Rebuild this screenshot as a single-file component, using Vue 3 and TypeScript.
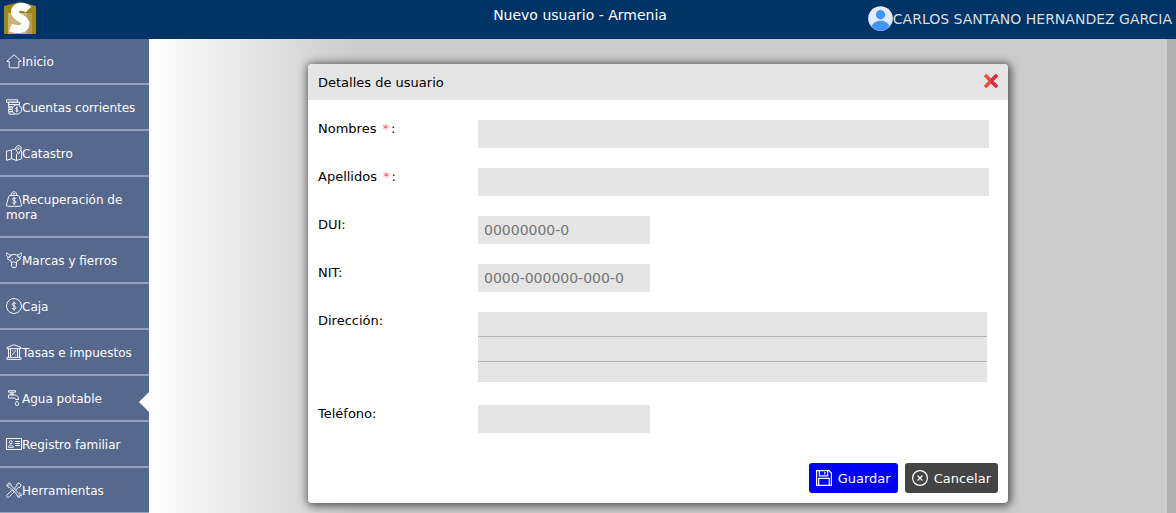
<script setup lang="ts">
import { ref } from 'vue'

interface MenuItem {
  label: string
  paths: string[]
  active?: boolean
}

const menu: MenuItem[] = [
  { label: 'Inicio', paths: ['M.8 8.4 8 1.7l7.2 6.7h-2.400M.8 8.4h2.400v5.600q0 .8.8.8h8q.8 0 .8-.8V8.400'] },
  {
    label: 'Cuentas corrientes',
    paths: ['M.5.8h11v2.4H.5zM2.5 3.2h11v2.3h-11zM6.5 5.5H2.5v2.4h4M6 7.9H3v2.4h3M6 10.3H2.5v2.4h4M7 12.7H3v2.5h6', 'M15.5 10.5a4.7 4.7 0 1 1-9.4 0 4.7 4.7 0 0 1 9.4 0zM12 9.2c-.5-.8-2.3-.7-2.3.4 0 1.2 2.3.7 2.3 2 0 1.1-1.8 1.2-2.4.3M10.8 7.7v5.8'],
  },
  {
    label: 'Catastro',
    paths: ['M10 3.7 5.5 5.2v8.5l5 1.8V8.7M5.5 5.2.5 6v9.400l5-1.700M10.5 15.5l5-1.7V5.5', 'M12.500 9 10.200 5a2.800 2.800 0 1 1 4.600 0zM13.3 3.5a.8.8 0 1 1-1.6 0 .8.8 0 0 1 1.6 0z'],
  },
  {
    label: 'Recuperación de mora',
    paths: ['M4 4.5h8q1 0 1.300 1l2.200 8.500q.2 1.300-1 1.300h-13q-1.200 0-1-1.300L2.700 5.500q.3-1 1.300-1zM5.3 4.3a2.8 2.8 0 1 1 5.4 0M6.7 2.8h2.6', 'M10 7.7c-.5-1-3.5-1-3.5.6 0 1.7 3.5.9 3.5 2.8 0 1.6-3 1.7-3.7.4M8.2 6v8'],
  },
  {
    label: 'Marcas y fierros',
    paths: ['M5 3C3.600 3 2 2.500.8.700-.1 3.4.8 5 3.800 5.200M11 3c1.400 0 3-.5 4.200-2.300.9 2.700 0 4.300-3 4.500M5 3q3-1.200 6 0M3.800 5.200 1 6.400l2.200 1.900 1.500-.2.8 3M12.200 5.200 15 6.400l-2.200 1.900-1.500-.2-.8 3M3.800 5.200 5 3M12.200 5.200 11 3', 'M5.5 10.8q2.5-2 5 0v3L9.7 15.4H6.3L5.5 13.8zM5.800 6.300l1.200.8M10.200 6.300l-1.200.8M6.8 12.8h.5M8.800 12.8h.5'],
  },
  {
    label: 'Caja',
    paths: ['M15.5 8a7.5 7.5 0 1 1-15 0 7.5 7.5 0 0 1 15 0z', 'M10 5.9c-.4-1.4-3.8-1.4-3.8.5 0 2.1 3.8 1.1 3.8 3.2 0 1.9-3.3 2-4 .5M8 3.5v9'],
  },
  {
    label: 'Tasas e impuestos',
    paths: ['M1 3.5 8 .7l7 2.8v1.2H1zM1 15.4h14v-2H1zM2.500 4.7v8.7M4.5 4.7v8.7M11.5 4.7v8.7M13.500 4.7v8.7', 'M6 11.2l4-5M6.3 7h.6M9.3 10.8h.6'],
  },
  {
    label: 'Agua potable',
    paths: ['M2.500.7h7v1.500h-7zM6 2.200v2.500M2.500 5h6c2.700 0 4 1.800 4 4.500h-3c0-1-.5-1.500-1.600-1.500H2.500zM4.300 5V3.800h3.400V5', 'M11 10.900c-1 1.400-1.700 2-1.700 2.900a1.700 1.700 0 0 0 3.400 0c0-.9-.7-1.500-1.700-2.900z'],
  },
  {
    label: 'Registro familiar',
    paths: ['M.5 2.5h15v11H.5z', 'M2.3 11.3c0-3 5-3 5 0zM6.2 6.2a1.4 1.6 0 1 1-2.8 0 1.4 1.6 0 0 1 2.8 0zM9 5.5h5M9 7.5h5M9 9.5h5'],
  },
  {
    label: 'Herramientas',
    paths: ['M5.200 3.800 12.500 11c1.700-.3 3.100 1.200 2.800 3l-1.500-1.200-1.200 1.100 1.300 1.400c-1.700.4-3.100-1-2.900-2.700L3.800 5.400C2 5.700.7 4.300.9 2.500l1.600 1.300 1.100-1.100L2.200 1.100c1.800-.4 3.200.9 3 2.700z', 'M15.200 3 13 .8l-2.300 1.600v1.500L8.500 6.100l1.600 1.600 2.200-2.200h1.500zM6.600 7.800.9 13c-1.200 1.200.9 3.300 2.100 2.100l5.500-5.600z'],
  },
].map((item) => ({ ...item, active: item.label === 'Agua potable' }))

const nombres = ref('')
const apellidos = ref('')
const dui = ref('')
const nit = ref('')
const direccion = ref('')
const telefono = ref('')
</script>

<template>
  <div class="app">
    <header class="topbar">
      <svg class="logo" viewBox="0 0 32 34" aria-label="Logo">
        <path fill="#a08418" d="M0 5 16 1l16 4v28H0z" />
        <path fill="#c8b478" d="M4 12h24v21H4z" />
        <path fill="#b49c48" d="M23 12h5v21h-5z" />
        <path
          fill="none"
          stroke="#fff"
          stroke-width="8"
          d="M24.500 8.500C21 5 11 4 11 11c0 6 11 6 10.500 12-.5 6-8.500 6-15 3.500"
        />
      </svg>
      <h1 class="title">Nuevo usuario - Armenia</h1>
      <div class="user">
        <svg class="avatar" viewBox="0 0 25 25" aria-hidden="true">
          <circle cx="12.500" cy="12.500" r="12.300" fill="#e4eaff" />
          <circle cx="12.500" cy="8.700" r="4.700" fill="#4294ff" />
          <path fill="#4294ff" d="M3.500 20.800c2-8 16-8 18 0a12.300 12.300 0 0 1-18 0z" />
        </svg>
        <span>CARLOS SANTANO HERNANDEZ GARCIA</span>
      </div>
    </header>

    <div class="body">
      <nav class="sidebar">
        <a v-for="item in menu" :key="item.label" href="#" class="item" :class="{ active: item.active }"
          ><svg class="icon" viewBox="0 0 16 16" aria-hidden="true">
            <path v-for="d in item.paths" :key="d" :d="d" /></svg
          >{{ item.label }}</a
        >
      </nav>

      <main class="content">
        <form class="dialog" @submit.prevent>
          <div class="dialog-head">
            <h2>Detalles de usuario</h2>
            <button type="button" class="close" aria-label="Cerrar">
              <svg viewBox="0 0 16 16" aria-hidden="true">
                <path fill="#fa4438" d="M3.200.800.800 3.200 5.600 8 .800 12.800l2.400 2.400L8 10.400l4.800 4.800 2.400-2.400L10.400 8l4.800-4.800L12.800.800 8 5.600z" />
                <path fill="#d1304c" d="M8 5.600 12.800.800l2.400 2.400L10.400 8l4.800 4.800-2.400 2.400L8 10.400z" />
              </svg>
            </button>
          </div>

          <div class="fields">
            <label for="nombres">Nombres <span class="req">*</span>:</label>
            <input id="nombres" v-model="nombres" type="text" />
            <label for="apellidos">Apellidos <span class="req">*</span>:</label>
            <input id="apellidos" v-model="apellidos" type="text" />
            <label for="dui">DUI:</label>
            <input id="dui" v-model="dui" class="short" type="text" placeholder="00000000-0" />
            <label for="nit">NIT:</label>
            <input id="nit" v-model="nit" class="short" type="text" placeholder="0000-000000-000-0" />
            <label for="direccion">Dirección:</label>
            <textarea id="direccion" v-model="direccion"></textarea>
            <label for="telefono">Teléfono:</label>
            <input id="telefono" v-model="telefono" class="short" type="text" />
          </div>

          <div class="actions">
            <button type="submit" class="btn save">
              <svg viewBox="0 0 16 16" aria-hidden="true">
                <path d="M.600.600h12.300l2.500 2.500v12.300H.600zM3.300.600v5.200h8.400V.600M8.800 2v2.400M2.700 15.400V8.300h10.600v7.100" />
              </svg>
              Guardar
            </button>
            <button type="button" class="btn cancel">
              <svg viewBox="0 0 16 16" aria-hidden="true">
                <circle cx="8" cy="8" r="7.400" />
                <path d="m5.500 5.500 5 5m0-5-5 5" />
              </svg>
              Cancelar
            </button>
          </div>
        </form>
      </main>
      <div class="track"></div>
    </div>
  </div>
</template>

<style>
body {
  margin: 0;
}
</style>

<style scoped>
.app {
  display: flex;
  flex-direction: column;
  height: 100vh;
  overflow: hidden;
  font-family: 'DejaVu Sans', Verdana, sans-serif;
  font-size: 13px;
  color: #000;
}
.topbar {
  display: grid;
  grid-template-columns: 1fr auto 1fr;
  flex: none;
  height: 39px;
  padding: 0 4px;
  background: #036;
  color: #fff;
  font-size: 14px;
}
.logo {
  width: 32px;
  height: 34px;
  margin-top: 1px;
}
.title {
  margin: 0;
  padding: 7px 16px 0 0;
  font-size: 14px;
  font-weight: 400;
  line-height: 16px;
}
.user {
  display: flex;
  justify-content: flex-end;
  align-items: center;
  height: 37px;
  color: #ddd;
  white-space: nowrap;
}
.avatar {
  flex: none;
  width: 25px;
  height: 25px;
}
.body {
  display: flex;
  flex: 1;
  min-height: 0;
}
.sidebar {
  flex: none;
  width: 149px;
  background: #56688c;
}
.item {
  position: relative;
  display: block;
  padding: 16px 6px 13px;
  border-bottom: 2px solid #94a1bd;
  color: #fff;
  font-size: 12px;
  line-height: 15px;
  text-decoration: none;
}
.icon {
  width: 16px;
  height: 16px;
  margin: -4px 0 -2px;
  vertical-align: -1px;
  fill: none;
  stroke: #f0f3f8;
  stroke-width: 1;
}
.active::after {
  content: '';
  position: absolute;
  top: 16px;
  right: 0;
  border: 10px solid transparent;
  border-left: 0;
  border-right-color: #fff;
}
.content {
  flex: 1;
  padding-top: 25px;
  background: linear-gradient(to right, #fff, #ccc 20%);
}
.track {
  flex: none;
  width: 9px;
  background: #b0b0b0;
}
.dialog {
  max-width: 700px;
  margin: 0 auto;
  border-radius: 4px;
  background: #fff;
  box-shadow: 1px 1px 8px 2px rgba(0, 0, 0, 0.6);
}
.dialog-head {
  display: flex;
  justify-content: space-between;
  align-items: center;
  height: 36px;
  padding: 0 9px 0 10px;
  border-radius: 4px 4px 0 0;
  background: #e5e5e5;
}
.dialog-head h2 {
  margin: 0;
  font-size: 13px;
  font-weight: 400;
}
.close {
  width: 16px;
  height: 20px;
  padding: 0 0 3px;
  border: 0;
  background: none;
}
.close svg {
  display: block;
  width: 16px;
  height: 16px;
}
.fields {
  display: grid;
  grid-template-columns: 160px 1fr;
  row-gap: 20px;
  padding: 20px 19px 30px 10px;
}
.fields label {
  line-height: 18px;
}
.req {
  margin: 0 2px;
  color: #ff6060;
}
input,
textarea {
  box-sizing: border-box;
  width: 100%;
  height: 28px;
  margin: 0;
  padding: 0 6px;
  border: 0;
  border-radius: 0;
  background: #e5e5e5;
  font: inherit;
  font-size: 14px;
}
input.short {
  width: 172px;
}
input::placeholder {
  color: #757575;
}
textarea {
  width: calc(100% - 2px);
  height: 70px;
  margin-bottom: 3px;
  background: repeating-linear-gradient(#e5e5e5 0 24px, #b5b5b5 24px 25px);
  line-height: 25px;
  resize: none;
}
.actions {
  display: flex;
  justify-content: flex-end;
  gap: 7px;
  padding: 0 10px 10px;
}
.btn {
  display: flex;
  align-items: center;
  gap: 6px;
  height: 30px;
  padding: 0 7px;
  border: 0;
  border-radius: 3px;
  color: #fff;
  font: inherit;
}
.btn svg {
  width: 16px;
  height: 16px;
  fill: none;
  stroke: #fff;
  stroke-width: 1.200;
}
.save {
  background: #00f;
}
.cancel {
  background: #444;
}
</style>
